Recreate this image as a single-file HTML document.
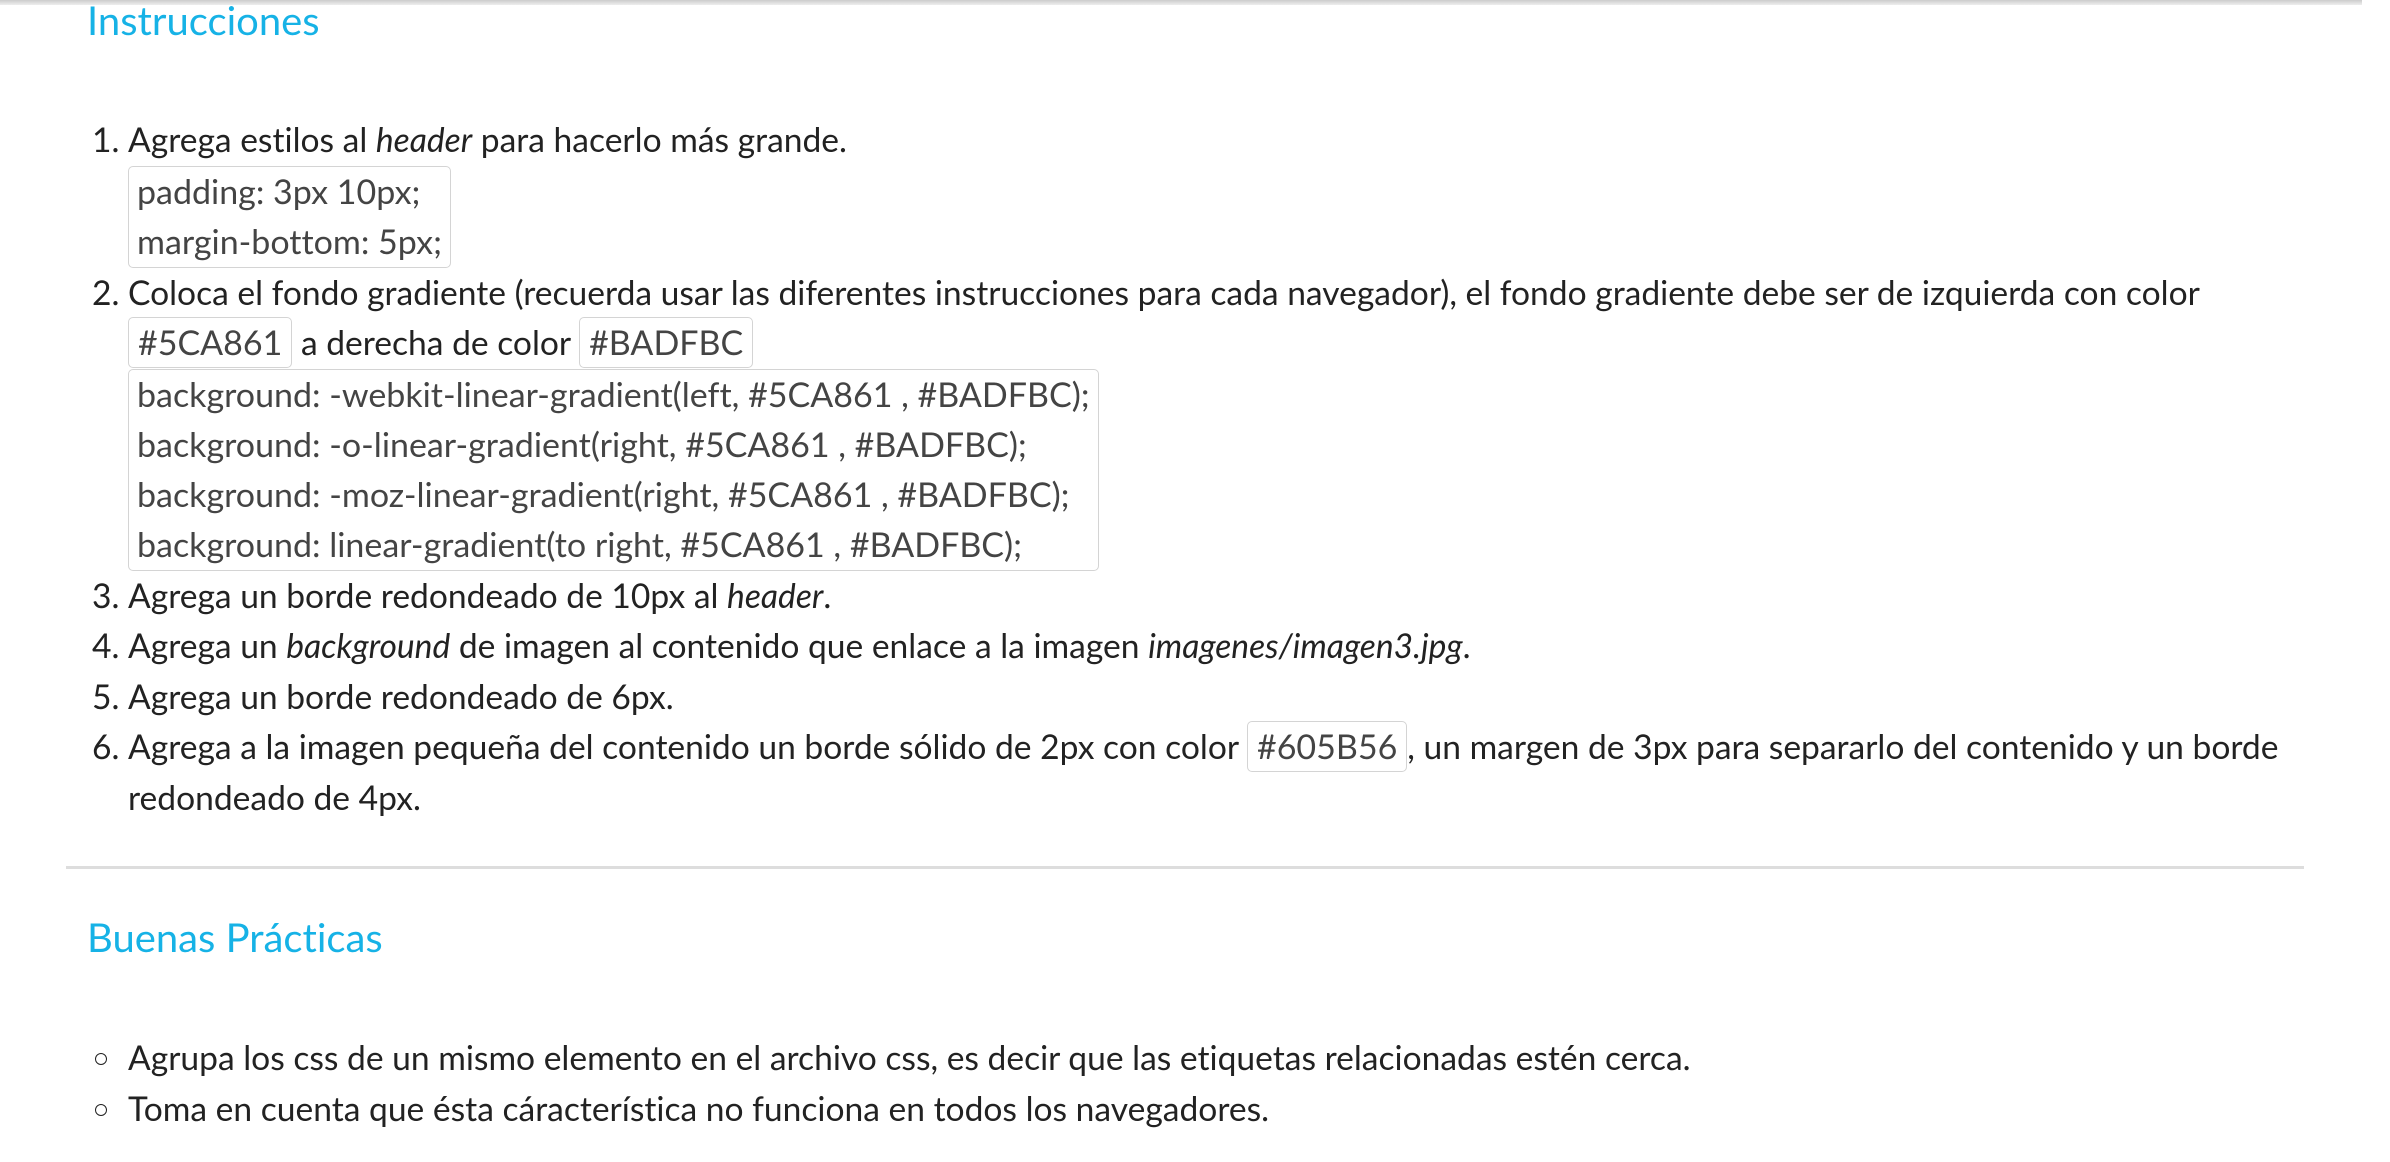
<!DOCTYPE html>
<html><head><meta charset="utf-8">
<style>
html,body{margin:0;padding:0;background:#fff;width:2390px;height:1162px;overflow:hidden;position:relative;font-family:"Lato","Liberation Sans",sans-serif;color:#222;font-variant-ligatures:none;}
.topbar{position:absolute;left:0;top:0;width:2362px;height:5px;background:linear-gradient(#ccc,#eee);}
h2{position:absolute;left:87px;margin:0;font-weight:normal;color:#16b2e6;font-size:40px;line-height:44px;white-space:nowrap}
ol,ul{position:absolute;left:0;margin:0;padding-left:128px;font-size:33.6px;line-height:50.5px;white-space:nowrap}
code{font-family:inherit;color:#444;border:1px solid #d4d4d4;border-radius:5px;padding:4px 9px;font-size:34px;background:#fff}
.blk{display:table;border:1px solid #d4d4d4;border-radius:5px;padding:0 8px;color:#444;font-size:34px;line-height:50px}
ul{list-style:none}
ul li{position:relative}
ul li:before{content:"";position:absolute;left:-33px;top:20px;width:10px;height:10px;border:1.8px solid #222;border-radius:50%}
hr{position:absolute;left:66px;top:866px;width:2238px;margin:0;border:0;border-top:3px solid #ddd}
</style></head><body>
<div class="topbar"></div>
<h2 style="top:-2px">Instrucciones</h2>
<ol style="top:115px">
<li>Agrega estilos al <i>header</i> para hacerlo más grande.
<div class="blk">padding: 3px 10px;<br>margin-bottom: 5px;</div></li>
<li>Coloca el fondo gradiente (recuerda usar las diferentes instrucciones para cada navegador), el fondo gradiente debe ser de izquierda con color<br><code>#5CA861</code> a derecha de color <code>#BADFBC</code>
<div class="blk">background: -webkit-linear-gradient(left, #5CA861 , #BADFBC);<br>background: -o-linear-gradient(right, #5CA861 , #BADFBC);<br>background: -moz-linear-gradient(right, #5CA861 , #BADFBC);<br>background: linear-gradient(to right, #5CA861 , #BADFBC);</div></li>
<li>Agrega un borde redondeado de 10px al <i>header</i>.</li>
<li>Agrega un <i>background</i> de imagen al contenido que enlace a la imagen <i>imagenes/imagen3.jpg</i>.</li>
<li>Agrega un borde redondeado de 6px.</li>
<li>Agrega a la imagen pequeña del contenido un borde sólido de 2px con color <code>#605B56</code>, un margen de 3px para separarlo del contenido y un borde<br>redondeado de 4px.</li>
</ol>
<hr>
<h2 style="top:915px">Buenas Prácticas</h2>
<ul style="top:1033px">
<li>Agrupa los css de un mismo elemento en el archivo css, es decir que las etiquetas relacionadas estén cerca.</li>
<li>Toma en cuenta que ésta cáracterística no funciona en todos los navegadores.</li>
</ul>
</body></html>
